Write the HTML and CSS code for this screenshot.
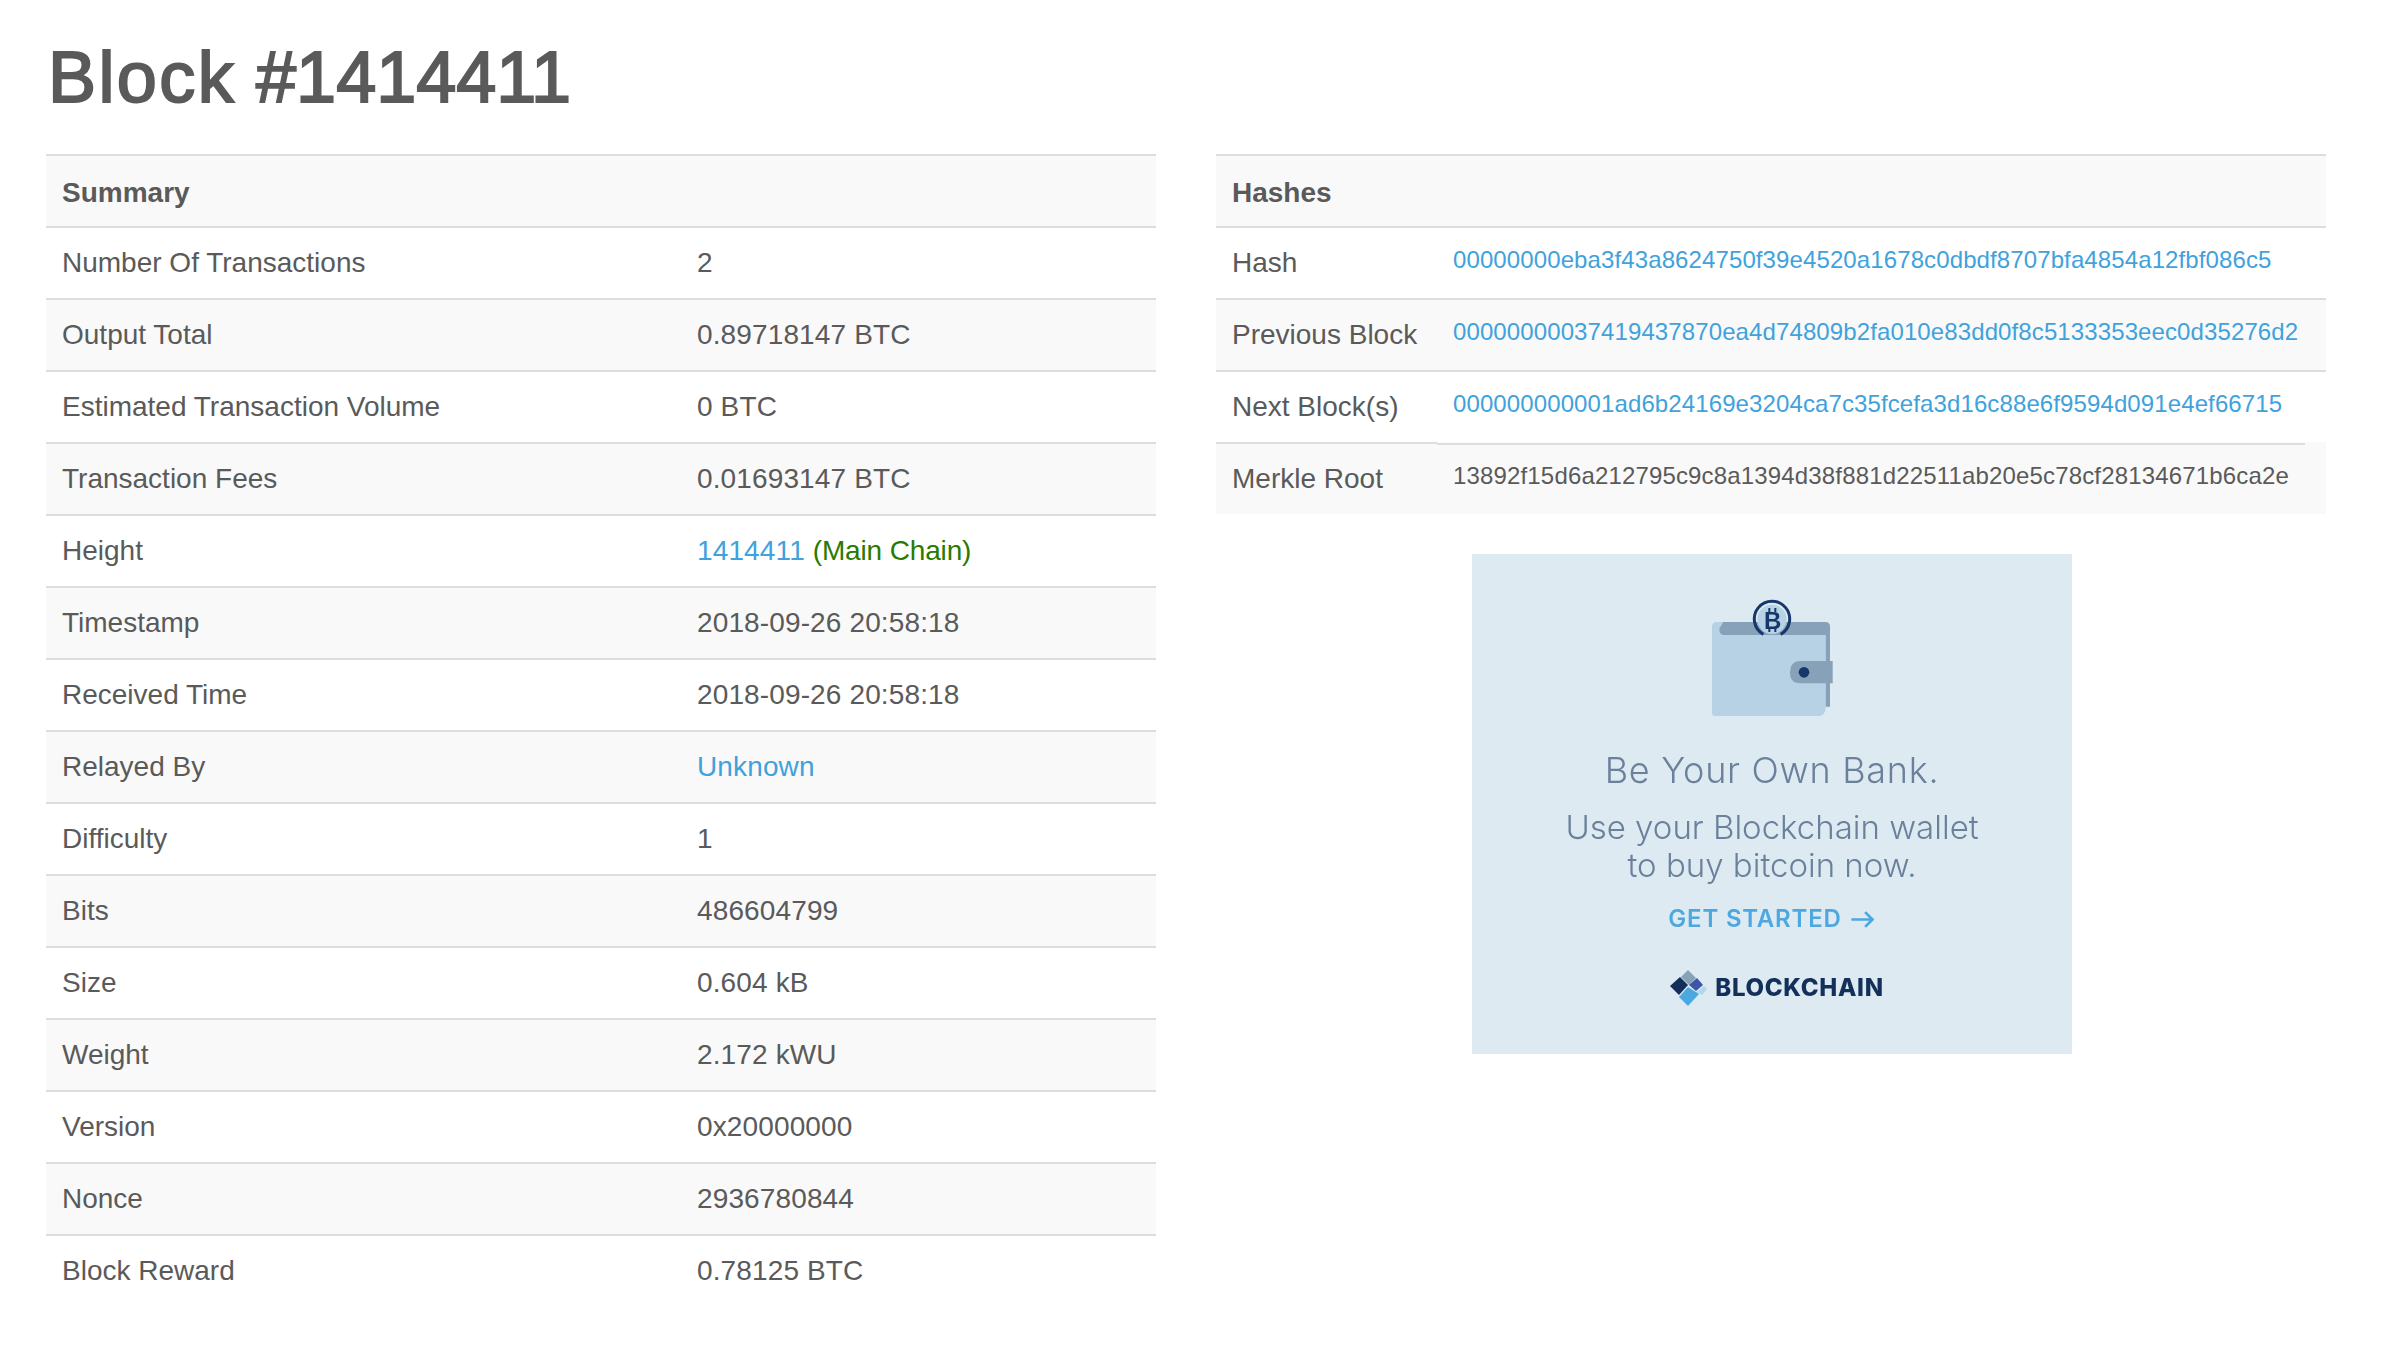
FILE: index.html
```html
<!DOCTYPE html>
<html lang="en">
<head>
<meta charset="utf-8">
<title>Block #1414411</title>
<link rel="stylesheet" href="styles.css">
</head>
<body>
<h1 class="title"><span class="title-word">Block</span> #1414411</h1>
<div class="columns">
  <table class="info summary">
    <colgroup><col class="summary-label"><col></colgroup>
    <thead><tr><th colspan="2">Summary</th></tr></thead>
    <tbody>
      <tr><td>Number Of Transactions</td><td class="val">2</td></tr>
      <tr><td>Output Total</td><td class="val">0.89718147 BTC</td></tr>
      <tr><td>Estimated Transaction Volume</td><td class="val">0 BTC</td></tr>
      <tr><td>Transaction Fees</td><td class="val">0.01693147 BTC</td></tr>
      <tr><td>Height</td><td class="val"><a href="#">1414411</a> <span class="main-chain">(Main Chain)</span></td></tr>
      <tr><td>Timestamp</td><td class="val">2018-09-26 20:58:18</td></tr>
      <tr><td>Received Time</td><td class="val">2018-09-26 20:58:18</td></tr>
      <tr><td>Relayed By</td><td class="val"><a href="#">Unknown</a></td></tr>
      <tr><td>Difficulty</td><td class="val">1</td></tr>
      <tr><td>Bits</td><td class="val">486604799</td></tr>
      <tr><td>Size</td><td class="val">0.604 kB</td></tr>
      <tr><td>Weight</td><td class="val">2.172 kWU</td></tr>
      <tr><td>Version</td><td class="val">0x20000000</td></tr>
      <tr><td>Nonce</td><td class="val">2936780844</td></tr>
      <tr><td>Block Reward</td><td class="val">0.78125 BTC</td></tr>
    </tbody>
  </table>
  <div class="side">
    <table class="info hashes">
      <colgroup><col class="hash-label"><col></colgroup>
      <thead><tr><th colspan="2">Hashes</th></tr></thead>
      <tbody>
        <tr><td>Hash</td><td class="hash"><a href="#">00000000eba3f43a8624750f39e4520a1678c0dbdf8707bfa4854a12fbf086c5</a></td></tr>
        <tr><td>Previous Block</td><td class="hash"><a href="#">00000000037419437870ea4d74809b2fa010e83dd0f8c5133353eec0d35276d2</a></td></tr>
        <tr><td>Next Block(s)</td><td class="hash"><a href="#">000000000001ad6b24169e3204ca7c35fcefa3d16c88e6f9594d091e4ef66715</a></td></tr>
        <tr class="merkle"><td>Merkle Root</td><td class="hash">13892f15d6a212795c9c8a1394d38f881d22511ab20e5c78cf28134671b6ca2e</td></tr>
      </tbody>
    </table>
    <div class="ad">
      <svg class="wallet" viewBox="0 0 660 480" width="220" height="160" aria-hidden="true">
        <path d="M178 126h318q14 0 14 14v240h-14V165H178z" fill="#86a1b8"/>
        <path d="M170 126h20q-12 10 0 39h307v215q0 28-22 28H165q-9 0-9-9V140q0-14 14-14z" fill="#b7d1e5"/>
        <path d="M178 150q0-15 15-15h110v30H193q-15 0-15-15z" fill="#86a1b8"/>
        <path d="M420 243h98v67h-98q-30 0-30-33t30-34z" fill="#86a1b8"/>
        <circle cx="432" cy="277" r="16" fill="#17376a"/>
        <circle cx="336" cy="118" r="44" fill="#b7d1e5"/>
        <path d="M310 163a53 53 0 1 1 52 0" fill="none" stroke="#17376a" stroke-width="9"/>
        <text class="coin-b" x="338" y="146" text-anchor="middle">B</text>
        <path d="M328 84v12M346 84v12M328 144v12M346 144v12" stroke="#17376a" stroke-width="6"/>
      </svg>
      <p class="ad-head">Be Your Own Bank.</p>
      <p class="ad-copy">Use your Blockchain wallet<br>to buy bitcoin now.</p>
      <p class="ad-cta">GET STARTED
        <svg class="cta-arrow" viewBox="0 0 24 18" width="26" height="19" aria-hidden="true"><path d="M1 9h20M14 2l7 7-7 7" fill="none" stroke="#4ea8df" stroke-width="2.6"/></svg>
      </p>
      <div class="ad-brand">
        <svg class="brand-mark" viewBox="0 0 38 38" width="38" height="38" aria-hidden="true">
          <path d="M19 1l8 8-7 7-8-8z" fill="#86a1b8"/>
          <path d="M11 8l8 8-9 10-9-9z" fill="#12305a"/>
          <path d="M28 9l6 7-7 6-7-6z" fill="#3f55a8"/>
          <path d="M35 17l3 3-5 6-5-3z" fill="#b4d5ea"/>
          <path d="M19 18l11 7-11 12-9-9z" fill="#4ba9e2"/>
        </svg>
        <span class="brand-name">BLOCKCHAIN</span>
      </div>
    </div>
  </div>
</div>
</body>
</html>
```
FILE: styles.css
```css
* { box-sizing: border-box; }
html, body { background: #fff; }
body {
  margin: 0;
  padding: 0 72px 0 46px;
  height: 1368px;
  overflow: hidden;
  font-family: "Liberation Sans", Arial, sans-serif;
  font-size: 28px;
  color: #5a5a5a;
}
.title {
  margin: 0;
  padding: 38px 0 0 2px;
  height: 154px;
  font-size: 72px;
  line-height: 78px;
  font-weight: 400;
  word-spacing: 0;
  color: #5a5a5a;
  -webkit-text-stroke: 2px #5a5a5a;
}
.title-word { letter-spacing: 2.4px; }
.columns {
  display: grid;
  grid-template-columns: 1110px 1110px;
  column-gap: 60px;
  align-items: start;
}
.info {
  width: 100%;
  table-layout: fixed;
  border-collapse: separate;
  border-spacing: 0;
}
.summary-label { width: 635px; }
.hash-label { width: 221px; }
.info th, .info td {
  height: 72px;
  padding: 15px 16px 0;
  border-top: 2px solid #ddd;
  text-align: left;
  vertical-align: top;
  line-height: 40px;
  white-space: nowrap;
}
.info th { background: #f9f9f9; font-weight: 700; padding-top: 17px; }
.info tbody tr:nth-child(even) td { background-color: #f9f9f9; }
.info a { color: #3fa2dc; text-decoration: none; }
.main-chain { color: #2a7a00; letter-spacing: -0.15px; }
.val { letter-spacing: 0.13px; }
.info .hash { font-size: 24px; line-height: 34px; letter-spacing: 0.11px; padding-top: 15px; }
.info .merkle td:last-child {
  border-top: 0;
  padding-top: 17px;
  letter-spacing: 0.16px;
  background: #f9f9f9 linear-gradient(#ddd, #ddd) 0 1px / calc(100% - 21px) 2px no-repeat;
}
.side { display: flex; flex-direction: column; align-items: center; }
.ad {
  width: 600px;
  height: 500px;
  margin: 40px 0 0 2px;
  background: #ddeaf2;
  display: flex;
  flex-direction: column;
  align-items: center;
  font-family: Inter, "Liberation Sans", sans-serif;
  color: #6b819b;
  text-align: center;
}
.wallet { display: block; margin: 26px 5px 0 0; flex: none; filter: blur(0.7px); }
.coin-b { font: 700 72px "Liberation Sans", sans-serif; fill: #17376a; }
.ad p { margin: 0; filter: blur(0.4px); }
.ad .ad-head { margin-top: 9px; font-size: 36px; line-height: 42px; font-weight: 300; letter-spacing: 0.7px; }
.ad .ad-copy { margin-top: 17px; font-size: 33px; line-height: 38px; font-weight: 300; letter-spacing: 0; }
.ad .ad-cta { margin-top: 19px; font-size: 24px; line-height: 32px; font-weight: 600; color: #4ea8df; letter-spacing: 0.8px; display: flex; align-items: center; gap: 8px; }
.cta-arrow { flex: none; }
.ad-brand { margin: 34px 0 0 9px; display: flex; align-items: center; gap: 8px; filter: blur(0.4px); }
.brand-mark { flex: none; }
.brand-name { font-size: 24px; line-height: 30px; font-weight: 800; color: #12305a; letter-spacing: 0.7px; }
```
